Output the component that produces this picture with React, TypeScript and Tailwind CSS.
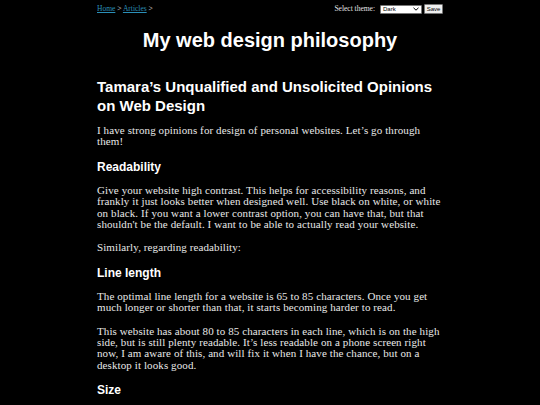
import React from 'react';

const serif = { fontFamily: '"Liberation Serif", "DejaVu Serif", serif' };

function Nav() {
  return (
    <div className="flex items-center justify-between h-[18px] text-[7.5px] text-[#e6e6e6]" style={serif}>
      <div>
        <a href="#" className="text-[#2b8fb8] underline">Home</a>
        <span> &gt; </span>
        <a href="#" className="text-[#2b8fb8] underline">Articles</a>
        <span> &gt;</span>
      </div>
      <div className="flex items-center gap-[2px]">
        <span className="mr-[3px]">Select theme:</span>
        <div className="flex items-center justify-between w-[42px] h-[9px] bg-white border border-[#767676] rounded-[1px] px-[2px] text-black text-[6px] font-['Liberation_Sans',sans-serif]">
          <span>Dark</span>
          <svg width="6" height="4" viewBox="0 0 6 4"><path d="M0.5 0.8 L3 3.2 L5.5 0.8" fill="none" stroke="#000" strokeWidth="1" /></svg>
        </div>
        <button className="h-[10px] w-[19px] bg-[#efefef] border border-[#767676] rounded-[1px] text-black text-[6px] leading-none font-['Liberation_Sans',sans-serif]">Save</button>
      </div>
    </div>
  );
}

function H3({ children }: { children: React.ReactNode }) {
  return <h3 className="text-[12px] font-bold leading-[15px] text-white mt-[11px] mb-[10px] font-['Liberation_Sans',sans-serif]">{children}</h3>;
}

function P({ children }: { children: React.ReactNode }) {
  return <p className="text-[11px] leading-[11.4px] tracking-[0.1px] text-[#e8e8e8] mb-[12px]" style={serif}>{children}</p>;
}

export default function App() {
  return (
    <div className="min-h-[405px] bg-black">
      <div className="w-[346px] mx-auto">
        <Nav />
        <h1 className="text-center text-[20px] font-bold text-white leading-[24px] mt-[10px] font-['Liberation_Sans',sans-serif]">My web design philosophy</h1>
        <h2 className="text-[15px] font-bold text-white leading-[19px] mt-[25px] mb-[10px] font-['Liberation_Sans',sans-serif]">
          Tamara’s Unqualified and Unsolicited Opinions on Web Design
        </h2>
        <P>I have strong opinions for design of personal websites. Let’s go through them!</P>
        <H3>Readability</H3>
        <P>
          Give your website high contrast. This helps for accessibility reasons, and frankly it just looks better when designed well. Use black on white, or white on black. If you want a lower contrast option, you can have that, but that shouldn't be the default. I want to be able to actually read your website.
        </P>
        <P>Similarly, regarding readability:</P>
        <H3>Line length</H3>
        <P>
          The optimal line length for a website is 65 to 85 characters. Once you get much longer or shorter than that, it starts becoming harder to read.
        </P>
        <P>
          This website has about 80 to 85 characters in each line, which is on the high side, but is still plenty readable. It’s less readable on a phone screen right now, I am aware of this, and will fix it when I have the chance, but on a desktop it looks good.
        </P>
        <H3>Size</H3>
      </div>
    </div>
  );
}
